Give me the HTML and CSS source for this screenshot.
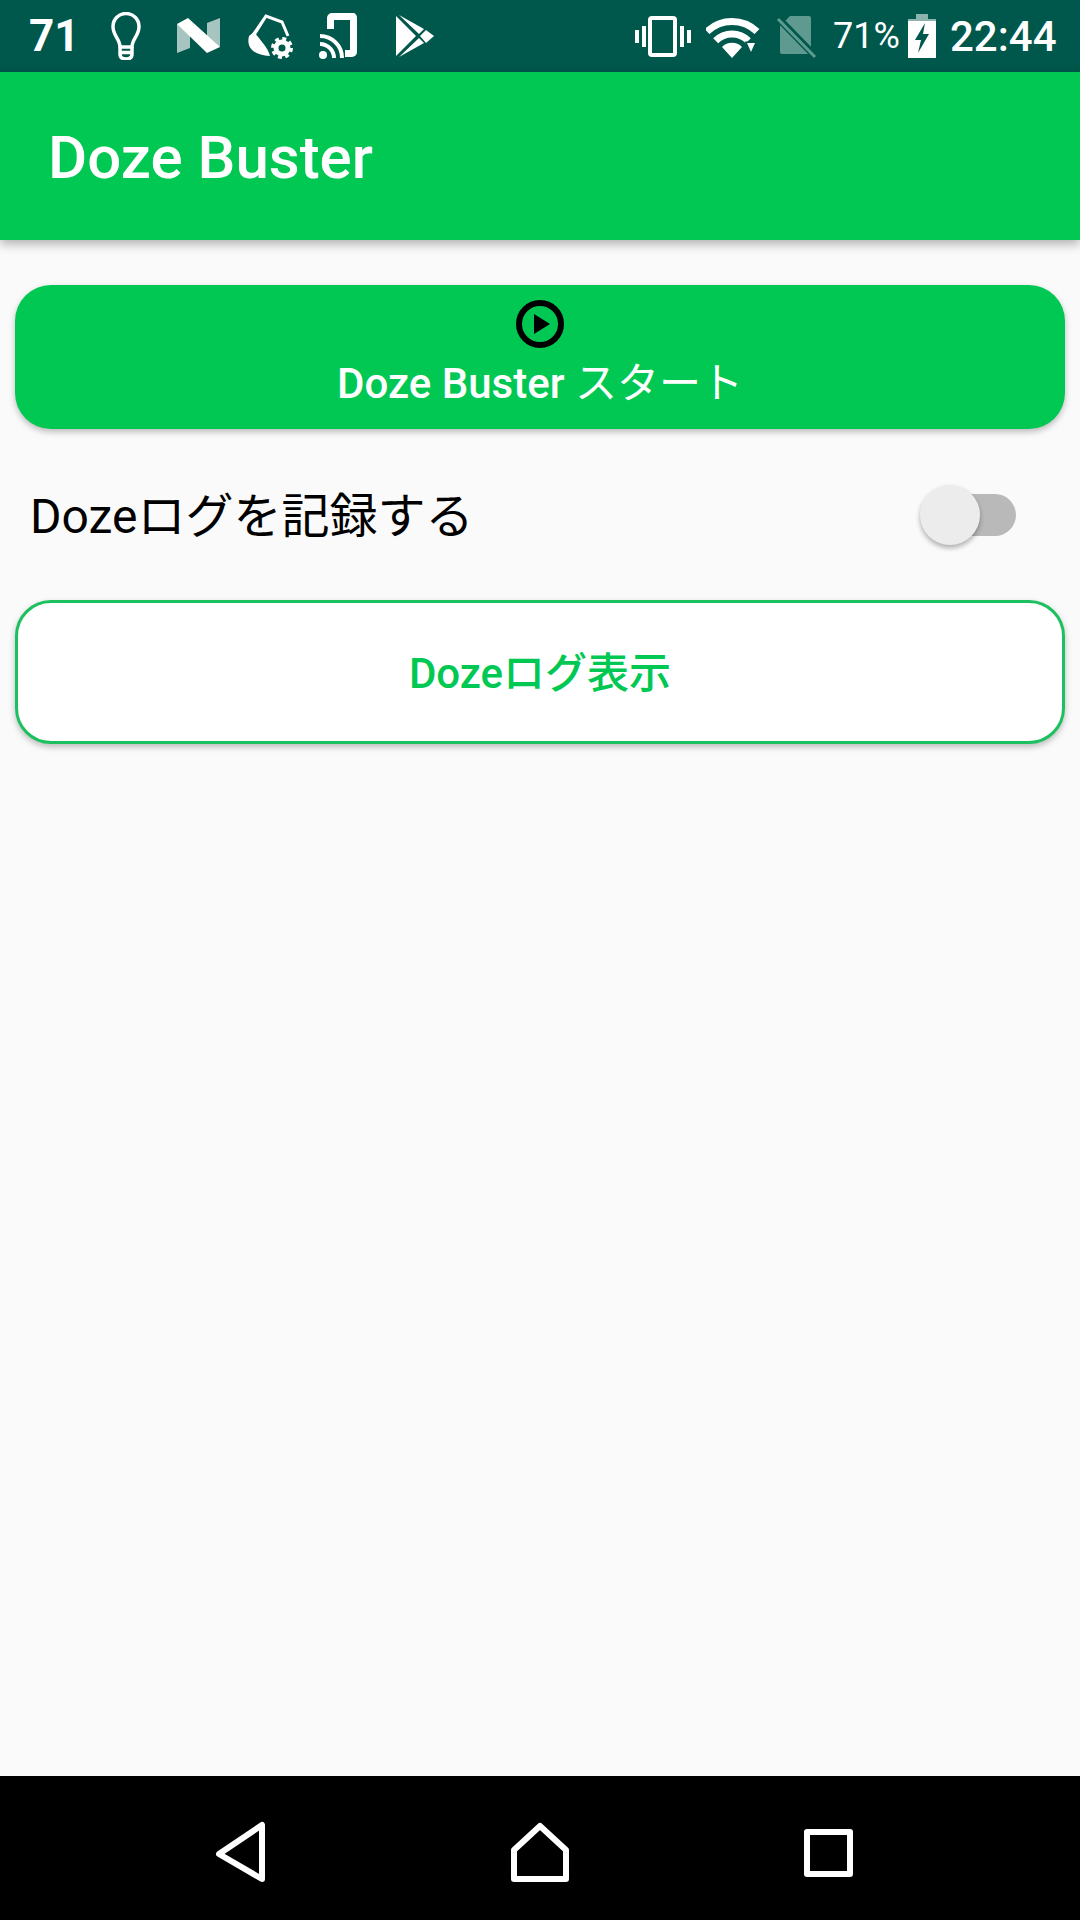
FILE: index.html
```html
<!DOCTYPE html>
<html lang="ja">
<head>
    <meta charset="UTF-8">
    <meta name="viewport" content="width=device-width, initial-scale=1.0">
    <title>Doze Buster</title>
    <link rel="stylesheet" href="styles.css">
</head>
<body>
    <div class="status-bar">
        <span class="notif-count">71</span>
        <svg class="slot" viewBox="0 0 48 48" fill="none" stroke="#fff" stroke-width="3.500">
            <path d="M18 35C18 27 11 24 11 14.500a13 13 0 0 1 26 0C37 24 30 27 30 35Z" stroke-linejoin="round"/>
            <path d="M18 35V42Q18 47 24 47T30 42V35M18 40.500H30"/>
        </svg>
        <svg class="slot" viewBox="0 0 48 48" fill="#fff">
            <polygon points="3,12 16,18 16,36 3,41" opacity="0.65"/>
            <polygon points="46,6 33,11 33,28 46,35" opacity="0.65"/>
            <polygon points="3,12 14,6 46,35 33,41"/>
        </svg>
        <svg class="slot" viewBox="0 0 48 48" fill="#fff">
            <path d="M3 24C0 36 8 43 24 44C22 36 16 30 8 20Z"/>
            <path d="M7 23L20 4L36 10L42 24M20 4L8 23C13 30 18 36 21 43" fill="none" stroke="#fff" stroke-width="3"/>
            <circle cx="36" cy="36" r="11" fill="#00574b"/>
            <circle cx="36" cy="36" r="6" fill="none" stroke="#fff" stroke-width="5"/>
            <circle cx="36" cy="36" r="9.500" fill="none" stroke="#fff" stroke-width="3" stroke-dasharray="4 3.460"/>
        </svg>
        <svg class="slot" viewBox="0 0 48 48" fill="none" stroke="#fff">
            <path d="M12.500 17V6A1.500 1.500 0 0 1 14 4.500H35A1.500 1.500 0 0 1 35.500 6V40A1.500 1.500 0 0 1 34 41.500H27" stroke-width="7"/>
            <circle cx="5" cy="43" r="4" fill="#fff" stroke="none"/>
            <path d="M2 32A14 14 0 0 1 16 46M2 24A22 22 0 0 1 24 46" stroke-width="4"/>
        </svg>
        <svg class="slot" viewBox="0 0 48 48" fill="#fff">
            <polygon points="6,4 6,44 26,24"/>
            <polygon points="9,3 29,22 34,17"/>
            <polygon points="9,45 29,26 34,31"/>
            <polygon points="36,18 44,24 36,31 30,24"/>
        </svg>

        <div class="status-right">
            <svg class="ic-vibrate" viewBox="0 0 56 48" fill="#fff">
                <rect x="15" y="6" width="25" height="37" rx="2" fill="none" stroke="#fff" stroke-width="4"/>
                <rect x="0" y="18" width="4" height="13"/>
                <rect x="7" y="14" width="4" height="21"/>
                <rect x="45" y="14" width="4" height="21"/>
                <rect x="52" y="18" width="4" height="13"/>
            </svg>
            <svg class="ic-wifi" viewBox="0 0 54 48" fill="none" stroke="#fff" stroke-width="7">
                <path d="M1 19.500A36 36 0 0 1 51 19.500M9.700 28.700A23 23 0 0 1 42.300 28.700"/>
                <path d="M26 46L16 35A14 14 0 0 1 36 35Z" fill="#fff" stroke="none"/>
                <polygon points="41,31 49,31 45,40" fill="#fff" stroke="#00574b" stroke-width="3" paint-order="stroke"/>
            </svg>
            <svg class="ic-sim" viewBox="0 0 44 48">
                <path d="M14 4H33Q35 4 35 6V40Q35 42 33 42H6Q4 42 4 40V14Z" fill="#5e9a90"/>
                <path d="M1 5L40 45" stroke="#00574b" stroke-width="7"/>
                <path d="M2 7L39 45" stroke="#5e9a90" stroke-width="3"/>
            </svg>
            <span class="batt-pct">71%</span>
            <svg class="ic-batt" viewBox="0 0 28 44">
                <path d="M8 0H20V5H28V14H0V5H8Z" fill="#fff" opacity="0.55"/>
                <rect y="7" width="28" height="37" fill="#fff"/>
                <polygon points="17,9 7,26 13,26 10,39 21,20 15,20" fill="#00574b"/>
            </svg>
            <span class="clock">22:44</span>
        </div>
    </div>

    <div class="app-bar">Doze Buster</div>

    <div class="content">
        <button class="btn btn-start">
            <svg class="play-icon" viewBox="0 0 48 48">
                <circle cx="24" cy="24" r="21" fill="none" stroke="#000" stroke-width="6"/>
                <polygon points="18,14 34,24 18,34" fill="#000"/>
            </svg>
            <span>Doze Buster <span class="cjk">スタート</span></span>
        </button>

        <div class="log-row">
            <span class="log-label">Dozeログを記録する</span>
            <div class="toggle"><div class="thumb"></div></div>
        </div>

        <button class="btn btn-log"><span class="log-text">Dozeログ表示</span></button>
    </div>

    <div class="nav-bar">
        <svg class="nav-icon" viewBox="0 0 60 60" fill="none" stroke="#fff" stroke-width="6" stroke-linejoin="round">
            <polygon points="9,31 52,2 52,56"/>
        </svg>
        <svg class="nav-icon nav-home" viewBox="0 0 60 60" fill="none" stroke="#fff" stroke-width="6" stroke-linejoin="round">
            <polygon points="30,3 56,27 56,56 4,56 4,27"/>
        </svg>
        <svg class="nav-icon nav-recent" viewBox="0 0 60 60" fill="none" stroke="#fff" stroke-width="6" stroke-linejoin="round">
            <rect x="8" y="9" width="43" height="42"/>
        </svg>
    </div>
</body>
</html>
```

FILE: styles.css
```css
* {
    box-sizing: border-box;
}

body {
    margin: 0;
    width: 1080px;
    height: 1920px;
    display: flex;
    flex-direction: column;
    background-color: #fafafa;
    font-family: Roboto, "Noto Sans CJK JP", sans-serif;
    overflow: hidden;
}

.status-bar {
    height: 72px;
    flex-shrink: 0;
    display: flex;
    align-items: center;
    background-color: #00574b;
    color: #fff;
}

.notif-count {
    width: 102px;
    padding-left: 29px;
    font-size: 44px;
    font-weight: 700;
}

.slot {
    width: 48px;
    height: 48px;
    margin-right: 24px;
}

.status-right {
    margin-left: auto;
    padding-right: 25px;
    display: flex;
    align-items: center;
}

.ic-vibrate {
    width: 56px;
    height: 48px;
    margin-right: 15px;
}

.ic-wifi {
    width: 54px;
    height: 48px;
    margin-right: 16px;
}

.ic-sim {
    width: 44px;
    height: 48px;
}

.batt-pct {
    width: 75px;
    margin-left: 13px;
    font-size: 36px;
}

.ic-batt {
    width: 28px;
    height: 44px;
    margin-right: 14px;
}

.clock {
    font-size: 42px;
    font-weight: 500;
    width: 105px;
}

.app-bar {
    height: 168px;
    flex-shrink: 0;
    display: flex;
    align-items: center;
    padding: 2px 0 0 48px;
    background-color: #00c853;
    color: #fff;
    font-size: 60px;
    font-weight: 500;
    box-shadow: 0 4px 10px rgba(0, 0, 0, 0.3);
    position: relative;
}

.content {
    flex: 1;
    display: flex;
    flex-direction: column;
    padding: 45px 15px 0;
}

.btn {
    height: 144px;
    width: 100%;
    border-radius: 36px;
    font-family: inherit;
    font-size: 42px;
    font-weight: 500;
    box-shadow: 0 3px 6px rgba(0, 0, 0, 0.25);
}

.btn-start {
    display: flex;
    flex-direction: column;
    align-items: center;
    padding: 15px 0 0;
    border: none;
    background-color: #00c853;
    color: #fff;
}

.cjk {
    font-weight: 400;
}

.play-icon {
    width: 48px;
    height: 48px;
    margin-bottom: 1px;
}

.log-row {
    height: 171px;
    display: flex;
    align-items: center;
    justify-content: space-between;
    padding: 0 49px 0 15px;
    font-size: 48px;
    color: #000;
}

.log-label {
    margin-bottom: 6px;
}

.toggle {
    position: relative;
    width: 84px;
    height: 42px;
    border-radius: 21px;
    background-color: #b9b9b9;
}

/* thumb sticks out over the track */
.thumb {
    position: absolute;
    left: -12px;
    top: -9px;
    width: 60px;
    height: 60px;
    border-radius: 50%;
    background-color: #ececec;
    box-shadow: 0 3px 5px rgba(0, 0, 0, 0.3);
}

.btn-log {
    border: 3px solid #1cc05f;
    background-color: #fff;
    color: #00c853;
}

.log-text {
    display: block;
    margin-bottom: 6px;
}

.nav-bar {
    height: 144px;
    flex-shrink: 0;
    display: flex;
    align-items: center;
    padding: 10px 0 0 210px;
    background-color: #000;
}

.nav-icon {
    width: 60px;
    height: 60px;
    overflow: visible;
}

.nav-home {
    margin-left: 240px;
}

.nav-recent {
    margin-left: 229px;
}
```
